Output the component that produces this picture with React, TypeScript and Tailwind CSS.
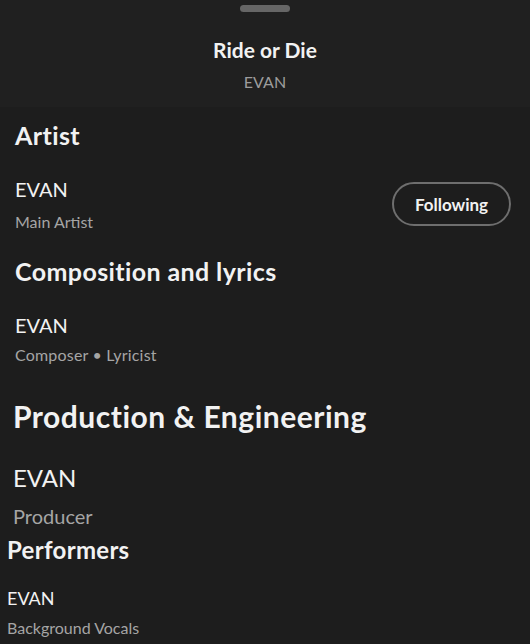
import React from "react";

const font = { fontFamily: "Lato, 'Noto Sans', sans-serif" };

const App: React.FC = () => {
  return (
    <div
      className="w-[530px] h-[644px] overflow-hidden bg-[#1d1d1d] text-[#f2f2f2]"
      style={font}
    >
      {/* header sheet */}
      <div className="bg-[#202020] pt-[5px] pb-[16px] flex flex-col items-center">
        <div className="w-[50px] h-[7px] rounded-full bg-[#666666]" />
        <h1 className="mt-[25px] text-[21px] leading-[1.2] font-bold">
          Ride or Die
        </h1>
        <p className="mt-[10px] text-[16px] leading-[1.2] text-[#9c9c9c]">
          EVAN
        </p>
      </div>

      {/* artist */}
      <div className="pl-[15px] pr-[19px] pt-[13px]">
        <h2 className="text-[25px] leading-[1.2] font-bold tracking-[0.4px]">
          Artist
        </h2>
        <div className="mt-[27px] flex items-center justify-between">
          <div>
            <p className="text-[20px] leading-[1.2]">EVAN</p>
            <p className="mt-[11px] text-[16px] leading-[1.2] text-[#a5a5a5]">
              Main Artist
            </p>
          </div>
          <button className="w-[119px] h-[44px] rounded-full border-2 border-[#6e6e6e] text-[17px] font-bold text-[#f2f2f2]">
            Following
          </button>
        </div>

        <h2 className="mt-[24px] text-[25px] leading-[1.2] font-bold tracking-[0.4px]">
          Composition and lyrics
        </h2>
        <p className="mt-[27px] text-[20px] leading-[1.2]">EVAN</p>
        <p className="mt-[8px] text-[16px] leading-[1.2] text-[#a5a5a5] tracking-[0.2px]">
          Composer • Lyricist
        </p>
      </div>

      {/* production */}
      <div className="pl-[13px] mt-[34px]">
        <h2 className="text-[30px] leading-[1.2] font-bold tracking-[0.5px]">
          Production &amp; Engineering
        </h2>
        <p className="mt-[30px] text-[24px] leading-[1.2]">EVAN</p>
        <p className="mt-[11px] text-[20px] leading-[1.2] text-[#a5a5a5]">
          Producer
        </p>
      </div>

      {/* performers */}
      <div className="pl-[7px] mt-[8px]">
        <h2 className="text-[24px] leading-[1.2] font-bold tracking-[0.3px]">
          Performers
        </h2>
        <p className="mt-[24px] text-[18px] leading-[1.2]">EVAN</p>
        <p className="mt-[8px] text-[16px] leading-[1.2] text-[#a5a5a5]">
          Background Vocals
        </p>
      </div>
    </div>
  );
};

export default App;
